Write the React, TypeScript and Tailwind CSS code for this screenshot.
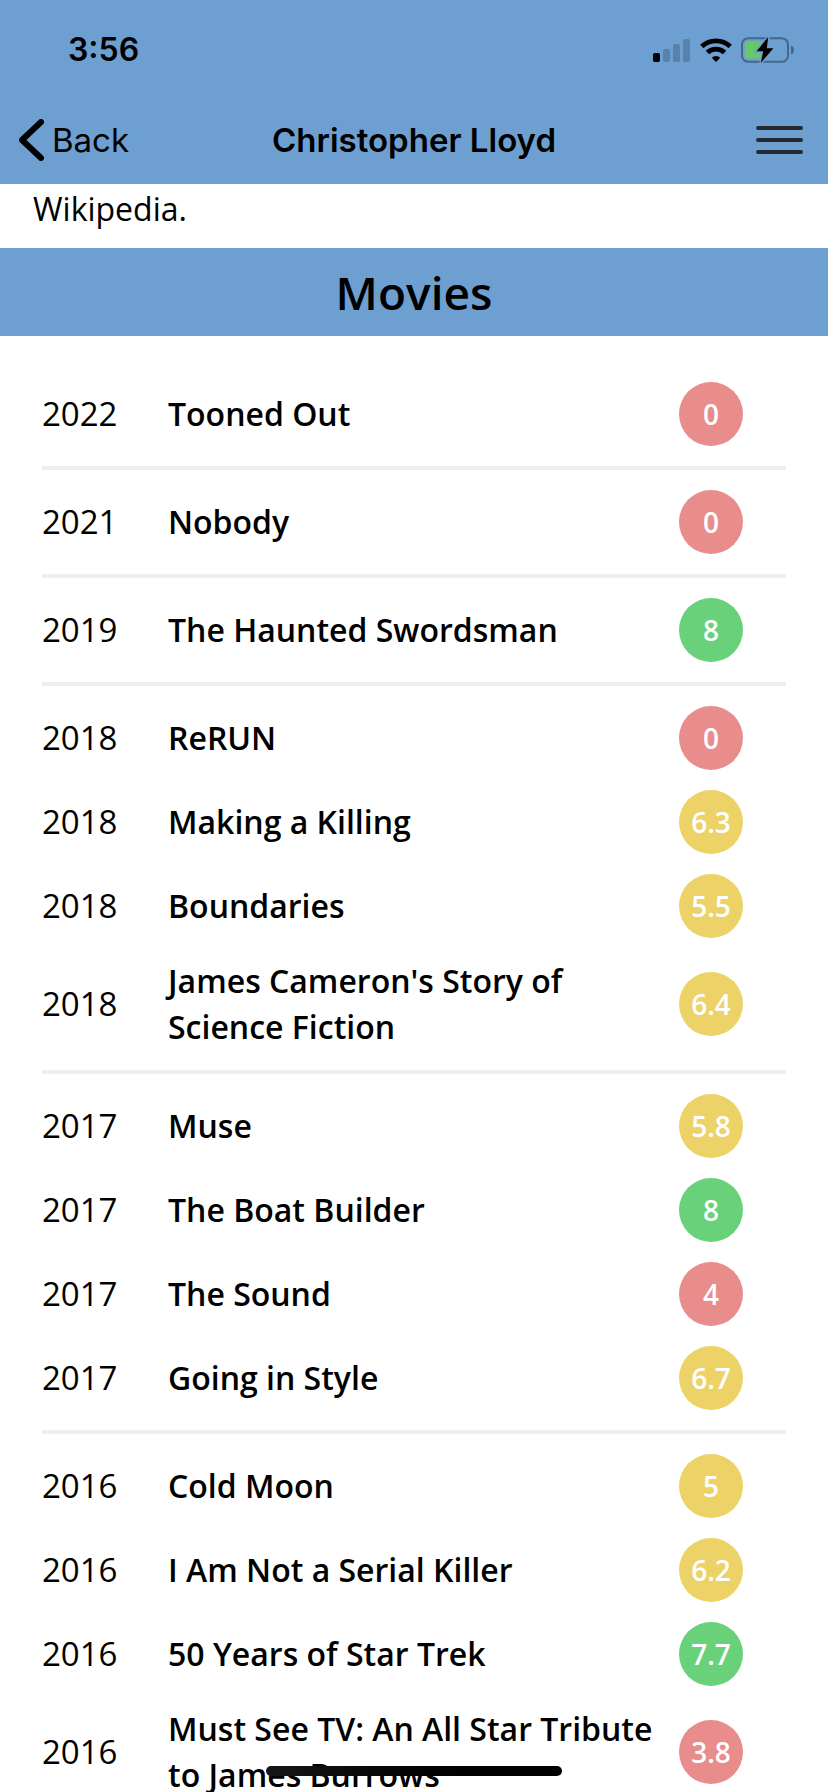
type Movie = { title: string; rating: number };
type YearGroup = { year: number; movies: Movie[] };

const FILMOGRAPHY: YearGroup[] = [
  { year: 2022, movies: [{ title: "Tooned Out", rating: 0 }] },
  { year: 2021, movies: [{ title: "Nobody", rating: 0 }] },
  { year: 2019, movies: [{ title: "The Haunted Swordsman", rating: 8 }] },
  {
    year: 2018,
    movies: [
      { title: "ReRUN", rating: 0 },
      { title: "Making a Killing", rating: 6.3 },
      { title: "Boundaries", rating: 5.5 },
      { title: "James Cameron's Story of Science Fiction", rating: 6.4 },
    ],
  },
  {
    year: 2017,
    movies: [
      { title: "Muse", rating: 5.8 },
      { title: "The Boat Builder", rating: 8 },
      { title: "The Sound", rating: 4 },
      { title: "Going in Style", rating: 6.7 },
    ],
  },
  {
    year: 2016,
    movies: [
      { title: "Cold Moon", rating: 5 },
      { title: "I Am Not a Serial Killer", rating: 6.2 },
      { title: "50 Years of Star Trek", rating: 7.7 },
      { title: "Must See TV: An All Star Tribute to James Burrows", rating: 3.8 },
    ],
  },
];

function ratingColor(rating: number) {
  if (rating >= 7) return "bg-[#69d17a]";
  if (rating >= 5) return "bg-[#edd367]";
  return "bg-[#e88c8c]";
}

function StatusIcons() {
  return (
    <div className="flex items-center gap-[9px]">
      <svg className="h-6 w-[38px]" viewBox="0 0 38 24" aria-hidden="true">
        <rect x="0" y="15" width="7" height="9" rx="1.8" fill="#000" />
        <g fill="#5882a9">
          <rect x="10" y="11" width="7" height="13" rx="1.8" />
          <rect x="20" y="6" width="7" height="18" rx="1.8" />
          <rect x="30" y="1" width="7" height="23" rx="1.8" />
        </g>
      </svg>
      <svg className="h-6 w-8" viewBox="0 0 32 24" aria-hidden="true">
        <g fill="none" stroke="#000" strokeWidth="4.8">
          <path d="M1.8 8.6a20.5 20.5 0 0 1 28.4 0" />
          <path d="M7.4 14.6a12.4 12.4 0 0 1 17.2 0" />
        </g>
        <path d="M16 24l-4.2-4.3a6 6 0 0 1 8.4 0z" fill="#000" />
      </svg>
      <svg className="h-[26px] w-[54px]" viewBox="0 0 54 26" aria-hidden="true">
        <rect x="1" y="1.2" width="46" height="23.6" rx="6.4" fill="none" stroke="#466789" strokeWidth="2" />
        <path d="M50 8.6c1.8.8 3 2.4 3 4.4s-1.2 3.6-3 4.4z" fill="#466789" />
        <path d="M7 4.5h16v17H7a3 3 0 0 1-3-3v-11a3 3 0 0 1 3-3z" fill="#66c868" />
        <path
          d="M27.2 0L15.6 14.2h6.6L19.8 26 32.4 11.2h-6.6z"
          fill="#000"
          stroke="#6e9fd1"
          strokeWidth="3"
          paintOrder="stroke"
        />
      </svg>
    </div>
  );
}

function MovieRow({ year, movie }: { year: number; movie: Movie }) {
  return (
    <li className="flex items-center py-[10px] pr-[43px]">
      <span className="w-[126px] shrink-0 text-[33px]">{year}</span>
      <span className="min-w-0 flex-1 pr-4 font-semibold">{movie.title}</span>
      <span
        className={`flex size-16 shrink-0 items-center justify-center rounded-full text-[28px] font-semibold text-white ${ratingColor(movie.rating)}`}
      >
        {movie.rating}
      </span>
    </li>
  );
}

export default function App() {
  return (
    <div className="relative flex h-screen flex-col overflow-hidden bg-white font-['Open_Sans','Noto_Sans',sans-serif] text-[32px] leading-[46px] text-black">
      <header className="shrink-0 bg-[#6e9fd1] font-['Inter',sans-serif]">
        <div className="flex h-[96px] items-center justify-between pt-1 pr-[33px] pl-[68px]">
          <time className="font-semibold">3:56</time>
          <StatusIcons />
        </div>
        <nav className="grid h-[88px] grid-cols-[1fr_auto_1fr] items-center px-[19px] text-[33px]">
          <button type="button" className="flex items-center gap-2 justify-self-start">
            <svg className="h-[42px] w-[25px]" viewBox="0 0 25 42" fill="none" aria-hidden="true">
              <path d="M22 3L3 21l19 18" stroke="#000" strokeWidth="6" strokeLinecap="round" strokeLinejoin="round" />
            </svg>
            Back
          </button>
          <h1 className="font-semibold">Christopher Lloyd</h1>
          <button type="button" aria-label="Menu" className="justify-self-end pr-[6px]">
            <svg className="h-7 w-[47px]" viewBox="0 0 47 28" aria-hidden="true">
              <path d="M2 2h43M2 14h43M2 26h43" stroke="#232a31" strokeWidth="4" strokeLinecap="round" />
            </svg>
          </button>
        </nav>
      </header>

      <main className="min-h-0 flex-1 overflow-y-auto [scrollbar-width:none]">
        <p className="px-[33px] pt-[2px] pb-4">Wikipedia.</p>
        <h2 className="bg-[#6e9fd1] text-center text-[46px] leading-[88px] font-semibold">Movies</h2>
        <div className="divide-y-4 divide-[#eeeeee] px-[42px] pt-[26px]">
          {FILMOGRAPHY.map((group) => (
            <ul key={group.year} className="py-[10px]">
              {group.movies.map((movie) => (
                <MovieRow key={movie.title} year={group.year} movie={movie} />
              ))}
            </ul>
          ))}
        </div>
      </main>

      <div className="absolute bottom-4 left-1/2 h-[10px] w-[296px] -translate-x-1/2 rounded-full bg-linear-to-r from-[#171717] to-black" />
    </div>
  );
}
